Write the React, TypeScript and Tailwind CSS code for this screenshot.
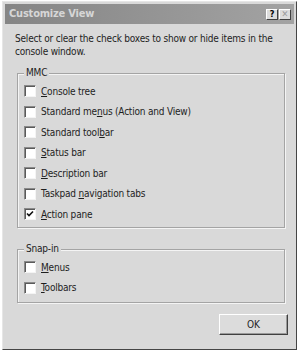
const font = { fontFamily: '"DejaVu Sans Condensed", "Liberation Sans", sans-serif' };

function Check({ label, u, checked }: { label: string; u: number; checked?: boolean }) {
  return (
    <div className="flex items-center h-[20.5px] gap-[5px]">
      <div className="w-[12px] h-[12px] bg-white border-t border-l border-t-[#8a8a8a] border-l-[#8a8a8a] border-b border-r border-b-[#f4f4f4] border-r-[#f4f4f4] shadow-[inset_1px_1px_0_#5a5a5a] flex items-center justify-center">
        {checked && (
          <svg width="8" height="8" viewBox="0 0 8 8">
            <path d="M1 3.5 L3 5.5 L7 1.5" stroke="#111" strokeWidth="1.6" fill="none" />
          </svg>
        )}
      </div>
      <span className="text-[10px] tracking-[-0.2px] text-[#1e1e1e]">
        {label.slice(0, u)}
        <span className="underline">{label[u]}</span>
        {label.slice(u + 1)}
      </span>
    </div>
  );
}

function Group({ title, children, className }: { title: string; children: React.ReactNode; className?: string }) {
  return (
    <div className={`relative border border-[#a4a4a4] shadow-[1px_1px_0_#f4f4f4,inset_1px_1px_0_#f4f4f4] ${className ?? ''}`}>
      <span className="absolute -top-[8px] left-[6px] bg-[#d9d9d9] px-[2px] text-[10px] tracking-[-0.2px] text-[#1e1e1e] leading-[14px]">
        {title}
      </span>
      <div className="pl-[6px] pt-[7px]">{children}</div>
    </div>
  );
}

export default function App() {
  return (
    <div className="w-[300px] h-[352px] bg-white pt-[1px] pl-[2px]" style={font}>
      <div className="w-[295px] h-[349px] bg-[#d9d9d9] border border-t-[#e6e6e6] border-l-[#e6e6e6] border-r-[#454545] border-b-[#454545] flex flex-col">
        <div className="mx-[2px] mt-[2px] h-[20px] bg-gradient-to-r from-[#858585] to-[#a3a3a3] flex items-center justify-between pl-[4px] pr-[3px]">
          <span className="text-[11px] font-bold tracking-[-0.2px] text-[#d6d6d6]">Customize View</span>
          <div className="flex gap-[1px]">
            <div className="w-[12px] h-[11px] bg-[#dcdcdc] border border-t-white border-l-white border-r-[#404040] border-b-[#404040] flex items-center justify-center text-[9px] font-bold leading-none text-black">?</div>
            <div className="w-[12px] h-[11px] bg-[#dcdcdc] border border-t-white border-l-white border-r-[#404040] border-b-[#404040] flex items-center justify-center text-[9px] leading-none text-[#9a9a9a]">✕</div>
          </div>
        </div>
        <p className="mt-[8px] mx-[12px] text-[10px] tracking-[-0.2px] leading-[13px] text-[#1e1e1e]">
          Select or clear the check boxes to show or hide items in the console window.
        </p>
        <Group title="MMC" className="mt-[15px] ml-[14px] w-[268px] h-[155px]">
          <Check label="Console tree" u={0} />
          <Check label="Standard menus (Action and View)" u={11} />
          <Check label="Standard toolbar" u={13} />
          <Check label="Status bar" u={0} />
          <Check label="Description bar" u={0} />
          <Check label="Taskpad navigation tabs" u={8} />
          <Check label="Action pane" u={0} checked />
        </Group>
        <Group title="Snap-in" className="mt-[21px] ml-[14px] w-[268px] h-[54px]">
          <Check label="Menus" u={0} />
          <Check label="Toolbars" u={0} />
        </Group>
        <div className="flex justify-end mr-[8px] mt-[11px]">
          <button className="w-[69px] h-[21px] bg-[#dcdcdc] border border-t-white border-l-white border-r-[#404040] border-b-[#404040] shadow-[inset_-1px_-1px_0_#9a9a9a] text-[10px] text-[#1e1e1e]">
            OK
          </button>
        </div>
      </div>
    </div>
  );
}
